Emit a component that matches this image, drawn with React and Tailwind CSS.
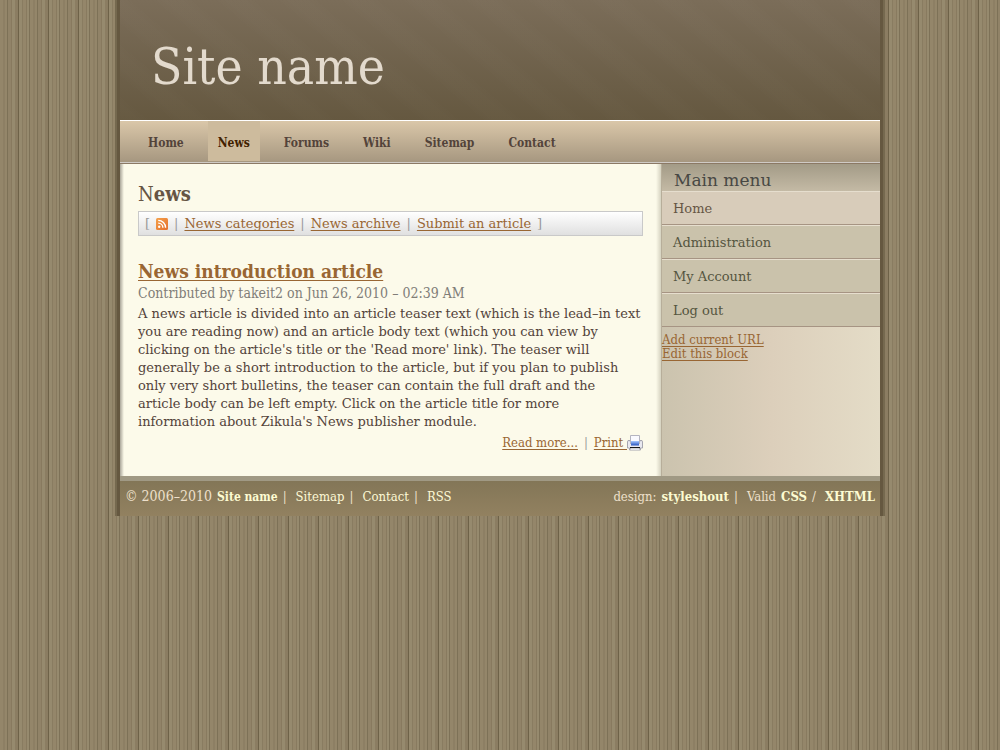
const navItems = [
  ['Home', 'mr-[14px]'], ['News', 'mr-[14px] bg-[#cdbb9d] text-[#422100]'], ['Forums', 'mr-[14px]'],
  ['Wiki', 'mr-[14px]'], ['Sitemap', 'mr-[14px]'], ['Contact', ''],
];
const menuItems = ['Home', 'Administration', 'My Account', 'Log out'];

function FeedIcon() {
  return (
    <svg viewBox="0 0 12 12" className="size-3" aria-hidden="true">
      <defs><linearGradient id="feed" x2="1" y2="1"><stop stopColor="#f5a14b" /><stop offset="1" stopColor="#e4702c" /></linearGradient></defs>
      <rect width="12" height="12" rx="1.5" fill="url(#feed)" />
      <circle cx="3.2" cy="8.8" r="1.2" fill="#fff" />
      <path d="M2.2 5.1a4.7 4.7 0 0 1 4.7 4.7M2.2 2.4a7.4 7.4 0 0 1 7.4 7.4" fill="none" stroke="#fff" strokeWidth="1.4" />
    </svg>
  );
}

function PrinterIcon() {
  return (
    <svg viewBox="0 0 16 16" className="size-4" aria-hidden="true">
      <defs><linearGradient id="ink" y2="1" x2="0"><stop stopColor="#a9c9ff" /><stop offset="1" stopColor="#2451bd" /></linearGradient></defs>
      <path d="M1 5.500h2l.5 2h9l.5-2h2l.5 1.500v6h-2v2h-11v-2h-2V7z" fill="#e9e9f0" stroke="#a5a5af" />
      <path d="M3.500 9V.5h9V9" fill="#fafaff" stroke="#b5b5c0" />
      <path d="M4 6h8v4.500H4z" fill="url(#ink)" />
      <path d="M3 12h10v1.300H3z" fill="#151515" />
      <path d="M4 14h8" stroke="#fff" />
    </svg>
  );
}

function Bar() {
  return <span className="text-[#999]">|</span>;
}

export default function App() {
  const link = 'text-[#996633] underline underline-offset-2 [text-decoration-skip-ink:none]';
  const wide = "font-['DejaVu_Serif',serif]";
  const foot = 'text-[#fdf8d5]';
  const footBold = 'font-bold text-[#fdfbd2]';
  return (
    <div className="min-h-screen bg-[#8e8065] bg-[repeating-linear-gradient(90deg,#94866a_0_3px,#8d7f64_3px_5px,#94866a_5px_7px,#7d7157_7px_8px,#918368_8px_11px,#887a5f_11px_12px,#968a6e_12px_15px,#8b7d62_15px_18px,#6e6248_18px_19px,#968a6e_19px_22px,#897c61_22px_23px,#94866a_23px_26px,#887a5f_26px_27px,#968a6e_27px_29px,#7d7157_29px_30px)] font-['DejaVu_Serif_Condensed','DejaVu_Serif',serif] text-[13px] text-[#53433a]">
      <div className="mx-auto max-w-[770px] border-x-2 border-[#75694f]">
        <div className="border-x-3 border-[#655840]">
          <header className="flex h-[120px] items-center bg-[repeating-linear-gradient(40deg,#ffffff03_0_12px,transparent_20px_32px,#ffffff03_40px),linear-gradient(#7b6d59,#655840)] pt-[14px] pl-[31px]">
            <h1 className="text-[51px] leading-[60px] text-[#e3dacd]">Site name</h1>
          </header>
          <nav className="flex h-11 border-t border-b border-t-white border-b-[#8b7965] bg-linear-to-b from-[#dac7a9] to-[#a5967f] pl-[18px] text-[12px] font-bold shadow-[inset_0_-1px_#cfcac5]">
            {navItems.map(([name, style]) => (
              <a key={name} href="#" className={`flex h-10 items-center px-[10px] pt-1 ${style}`}>{name}</a>
            ))}
          </nav>
          <div className="flex">
            <main className="min-w-0 flex-1 bg-[#fcfaea] bg-[linear-gradient(90deg,#aaa69a,#fcfaea00_4px),linear-gradient(270deg,#d5d2c0,#fcfaea00_5px)] pt-[18px] pr-[18px] pb-[23px] pl-[18px]">
              <h2 className="text-[20px] leading-6 font-bold text-[#665544] first-letter:font-normal">News</h2>
              <div className={`mt-[5px] flex h-[25px] items-center gap-[6px] border border-[#c9c9c9] bg-linear-to-b from-white to-[#e0e0e0] px-[6px] text-[#999] ${wide}`}>
                <span>[</span><a href="#" aria-label="News feed"><FeedIcon /></a><Bar />
                <a href="#" className={link}>News categories</a><Bar />
                <a href="#" className={link}>News archive</a><Bar />
                <a href="#" className={link}>Submit an article</a><span>]</span>
              </div>
              <h3 className="mt-[23px] text-[19px] leading-6 font-bold"><a href="#" className={link}>News introduction article</a></h3>
              <p className="text-[14px] leading-5 text-[#807d78]">Contributed by takeit2 on Jun 26, 2010 – 02:39 AM</p>
              <p className={`mt-0.5 pr-0.5 leading-[18px] ${wide}`}>
                A news article is divided into an article teaser text (which is the lead–in text you are reading now) and an article body text (which you can view by clicking on the article's title or the 'Read more' link). The teaser will generally be a short introduction to the article, but if you plan to publish only very short bulletins, the teaser can contain the full draft and the article body can be left empty. Click on the article title for more <br />
                information about Zikula's News publisher module.
              </p>
              <p className="mt-0.5 flex h-5 items-center justify-end gap-[6px]">
                <a href="#" className={link}>Read more...</a><Bar />
                <a href="#" className={`flex items-center whitespace-pre ${link}`}>{'Print '}<PrinterIcon /></a>
              </p>
            </main>
            <aside className="w-[219px] shrink-0 border-l border-[#b7ae9a] bg-linear-to-r from-[#cbc3ae] via-[#dccfbb] to-[#e4dcc7]">
              <h2 className={`h-[27px] bg-linear-to-b from-[#a39b87] to-[#c4baa5] pt-1 pl-3 text-[17px] leading-6 text-[#484844] ${wide}`}>Main menu</h2>
              <ul className={wide}>
                {menuItems.map((name, i) => (
                  <li key={name}><a href="#" className={`flex h-[34px] items-center border-t border-b border-t-[#e6dece] border-b-[#a69483] pt-0.5 pl-[11px] ${i === 0 ? 'bg-[#d8ccba] text-[#665544]' : 'bg-[#cac2ab] text-[#55553f]'}`}>{name}</a></li>
                ))}
              </ul>
              <p className="mt-1.5 flex flex-col items-start leading-[14px]">
                <a href="#" className={link}>Add current URL</a><a href="#" className={link}>Edit this block</a>
              </p>
            </aside>
          </div>
          <footer className="flex h-10 items-center justify-between border-t-[5px] border-[#a09984] bg-linear-to-b from-[#837657] to-[#928160] px-[5px] pb-1 text-[#eee0cb]">
            <p className="flex items-baseline gap-[5px]">
              <span className="text-[14px]">© 2006–2010</span>
              <a href="#" className={`text-[12px] ${footBold}`}>Site name</a><span>|</span>
              <a href="#" className={`ml-1 ${foot}`}>Sitemap</a><span>|</span>
              <a href="#" className={`ml-1 ${foot}`}>Contact</a><span>|</span>
              <a href="#" className={`ml-1 ${foot}`}>RSS</a>
            </p>
            <p className="flex items-baseline gap-[5px]">
              <span>design:</span>
              <a href="#" className={footBold}>styleshout</a><span>|</span>
              <span className="ml-1">Valid</span>
              <a href="#" className={footBold}>CSS</a><span>/</span>
              <a href="#" className={`ml-1 ${footBold}`}>XHTML</a>
            </p>
          </footer>
        </div>
      </div>
    </div>
  );
}
